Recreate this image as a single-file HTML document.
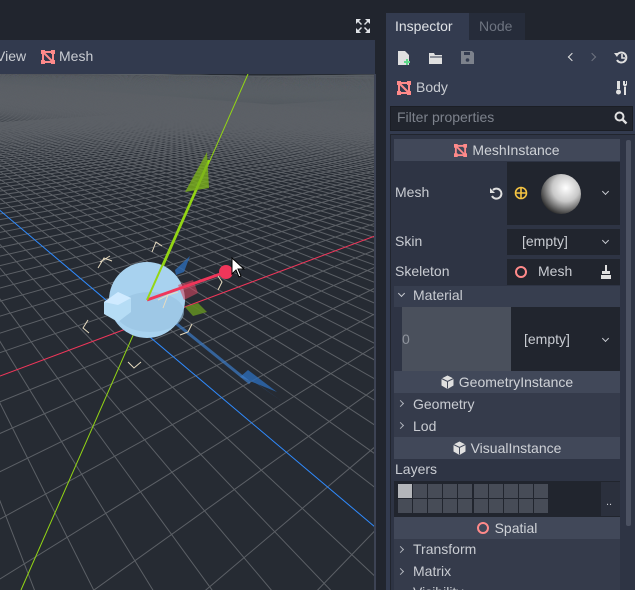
<!DOCTYPE html>
<html style="overflow:hidden;height:590px"><head><meta charset="utf-8"><style>
*{margin:0;padding:0;box-sizing:border-box}
body{width:635px;height:590px;overflow:hidden;background:#21252e;font-family:"Liberation Sans","DejaVu Sans",sans-serif;font-size:14px;color:#c9ccd2;position:relative}
.a{position:absolute}
.hdr{position:absolute;left:394px;width:226px;background:#414859;text-align:center;line-height:22px;color:#cfd2d7}
.val{position:absolute;background:#21252e}
.lbl{position:absolute;left:395px}
.chev{position:absolute;width:6px;height:6px;border-right:1.5px solid #c9ccd2;border-bottom:1.5px solid #c9ccd2;transform:rotate(45deg)}
.chr{position:absolute;width:5px;height:5px;border-right:1.5px solid #aeb2ba;border-bottom:1.5px solid #aeb2ba;transform:rotate(-45deg)}
</style></head><body>
<div class="a" style="left:0;top:40px;width:375px;height:34px;background:#323a4e"></div>
<div class="a" style="left:-4px;top:48px;color:#c9ccd2;font-size:14px">View</div>
<svg class="a" style="left:41px;top:50px" width="14" height="14" viewBox="0 0 14 14"><rect x="2" y="2" width="10" height="10" fill="none" stroke="#ff8a8a" stroke-width="2"/><path d="M2 2L12 12" stroke="#ff8a8a" stroke-width="2"/><rect x="0" y="0" width="4" height="4" fill="#ff8a8a"/><rect x="10" y="0" width="4" height="4" fill="#ff8a8a"/><rect x="0" y="10" width="4" height="4" fill="#ff8a8a"/><rect x="10" y="10" width="4" height="4" fill="#ff8a8a"/></svg>
<div class="a" style="left:59px;top:48px">Mesh</div>
<svg class="a" style="left:355px;top:18px" width="16" height="16" viewBox="0 0 16 16" fill="#dfe2e6"><path d="M1 1h5l-2 2 3 3-1 1-3-3-2 2z"/><path d="M15 1v5l-2-2-3 3-1-1 3-3-2-2z"/><path d="M1 15v-5l2 2 3-3 1 1-3 3 2 2z"/><path d="M15 15h-5l2-2-3-3 1-1 3 3 2-2z"/></svg>
<div class="a" style="left:0;top:74px;width:375px;height:516px;overflow:hidden">
<svg id="vp" width="375" height="516" viewBox="0 74 375 516" style="display:block">
<rect x="0" y="74" width="375" height="516" fill="#262b33"/>
<g id="grid" stroke="#5c6066" stroke-width="1"></g>
<line x1="0" y1="376" x2="375" y2="236" stroke="#f0365a" stroke-width="1"/>
<line x1="-80" y1="143" x2="375" y2="527" stroke="#2f8bff" stroke-width="1"/>
<line x1="248" y1="74" x2="21" y2="590" stroke="#93d614" stroke-width="1"/>
<polygon points="277,392 240,377 248,370" fill="#2d6bb5" opacity=".8"/>
<polygon points="240,372 283,402 252,380" fill="#2d6bb5" opacity=".7"/>
<line x1="147" y1="300" x2="250" y2="383" stroke="#3c7bc6" stroke-width="3" opacity=".7"/>
<circle cx="147" cy="300" r="38" fill="#a8d2ef"/>
<ellipse cx="150" cy="312" rx="34" ry="20" fill="#98c2df" opacity=".6"/>
<polygon points="104,302 118,292 131,298 131,312 118,322 104,314" fill="#b5dcf5"/>
<polygon points="118,292 131,298 118,305 104,302" fill="#cfeaff"/>
<polygon points="175,270 190,256 184,272 176,275" fill="#2d6bb5" opacity=".8"/>
<polygon points="178,285 193,280 198,293 184,300" fill="#d24660" opacity=".6"/>
<polygon points="185,307 198,303 207,312 193,316" fill="#5f8a22" opacity=".9"/>
<line x1="147" y1="300" x2="226" y2="272" stroke="#f0365a" stroke-width="3"/>
<circle cx="226" cy="272" r="7" fill="#f0365a"/>
<line x1="147" y1="300" x2="209" y2="160" stroke="#93d614" stroke-width="2"/>
<polygon points="207,152 185,192 209,188" fill="#7bb01a" opacity=".8"/>
<g stroke="#e8dcc0" stroke-width="1" fill="none"><path d="M98 268l6-10 8 3M100 262l10 -6"/><path d="M152 252l4-10 6 4"/><path d="M88 320l-5 8 6 5"/><path d="M128 362l6 6 7-6"/><path d="M180 335l8-3 4-8"/><path d="M218 290l4-8 -4-6"/><path d="M158 300l10-5 10-3M168 295l-5 13"/></g>
<path d="M232 258v16l4-4 3 7 2-1-3-7h6z" fill="#fff" stroke="#000" stroke-width="1"/>
</svg></div>
<div class="a" style="left:374px;top:74px;width:2px;height:516px;background:#3d4354"></div>
<div class="a" style="left:386px;top:13px;width:83px;height:28px;background:#333b4f"></div>
<div class="a" style="left:395px;top:18px;color:#dfe2e6">Inspector</div>
<div class="a" style="left:469px;top:13px;width:56px;height:28px;background:#262c3a"></div>
<div class="a" style="left:479px;top:18px;color:#6e7480">Node</div>
<div class="a" style="left:386px;top:40px;width:249px;height:550px;background:#333b4f"></div>
<svg class="a" style="left:397px;top:50px" width="14" height="16" viewBox="0 0 14 16"><path d="M1 1h7l4 4v10H1z" fill="#e0e0e0"/><path d="M9 9h2v2h2v2h-2v2H9v-2H7v-2h2z" fill="#5fd88a"/></svg>
<svg class="a" style="left:428px;top:51px" width="16" height="14" viewBox="0 0 16 14"><path d="M1 2h5l1 2h7v9H1z" fill="#e0e0e0"/><path d="M2 6h12" stroke="#333b4f"/></svg>
<svg class="a" style="left:460px;top:50px" width="15" height="15" viewBox="0 0 15 15"><path d="M1 1h11l2 2v11H1z" fill="#7d828c"/><rect x="4" y="2" width="6" height="3" fill="#333b4f"/><circle cx="7.5" cy="10" r="1.8" fill="#333b4f"/></svg>
<div class="chev" style="left:569px;top:54px;transform:rotate(135deg);border-color:#e0e0e0"></div>
<div class="chev" style="left:589px;top:54px;transform:rotate(-45deg);border-color:#6e7480"></div>
<svg class="a" style="left:614px;top:50px" width="15" height="15" viewBox="0 0 15 15"><path d="M3 5a5 5 0 1 1 0 5" fill="none" stroke="#e0e0e0" stroke-width="2"/><path d="M0 3l5 0-2 4z" fill="#e0e0e0"/><path d="M8 4v4h3" fill="none" stroke="#e0e0e0" stroke-width="1.6"/></svg>
<svg class="a" style="left:397px;top:81px" width="14" height="14" viewBox="0 0 14 14"><rect x="2" y="2" width="10" height="10" fill="none" stroke="#ff8a8a" stroke-width="2"/><path d="M2 2L12 12" stroke="#ff8a8a" stroke-width="2"/><rect x="0" y="0" width="4" height="4" fill="#ff8a8a"/><rect x="10" y="0" width="4" height="4" fill="#ff8a8a"/><rect x="0" y="10" width="4" height="4" fill="#ff8a8a"/><rect x="10" y="10" width="4" height="4" fill="#ff8a8a"/></svg>
<div class="a" style="left:416px;top:79px">Body</div>
<svg class="a" style="left:616px;top:80px" width="12" height="16" viewBox="0 0 12 16" fill="#e0e0e0"><path d="M1 1h3v8h-3z"/><circle cx="2.5" cy="12" r="2.5"/><path d="M7 1v4l2 2 2-2V1h-1v3h-1V1zM8 7h2v8H8z"/></svg>
<div class="a" style="left:390px;top:106px;width:243px;height:25px;background:#21252e;border:1px solid #1b1e25"></div>
<div class="a" style="left:397px;top:109px;color:#7d828c">Filter properties</div>
<svg class="a" style="left:614px;top:111px" width="14" height="14" viewBox="0 0 14 14"><circle cx="5.5" cy="5.5" r="4" fill="none" stroke="#e0e0e0" stroke-width="2"/><path d="M8.5 8.5l4 4" stroke="#e0e0e0" stroke-width="2.4"/></svg>
<div class="a" style="left:390px;top:134px;width:245px;height:456px;background:#2e3444;border-left:1px solid #21252e;border-top:1px solid #21252e"></div>
<div class="a" style="left:626px;top:140px;width:5px;height:386px;background:#4b5161;border-radius:2px"></div>
<div class="hdr" style="top:139px"><svg style="vertical-align:-2px;margin-right:5px" width="13" height="13" viewBox="0 0 14 14"><rect x="2" y="2" width="10" height="10" fill="none" stroke="#ff8a8a" stroke-width="2"/><path d="M2 2L12 12" stroke="#ff8a8a" stroke-width="2"/><rect x="0" y="0" width="4" height="4" fill="#ff8a8a"/><rect x="10" y="0" width="4" height="4" fill="#ff8a8a"/><rect x="0" y="10" width="4" height="4" fill="#ff8a8a"/><rect x="10" y="10" width="4" height="4" fill="#ff8a8a"/></svg>MeshInstance</div>
<div class="lbl" style="top:184px">Mesh</div>
<svg class="a" style="left:489px;top:186px" width="14" height="14" viewBox="0 0 14 14"><path d="M4 4a5 5 0 1 1-1 6" fill="none" stroke="#e0e0e0" stroke-width="2"/><path d="M1 2v5h5z" fill="#e0e0e0"/></svg>
<div class="val" style="left:507px;top:162px;width:113px;height:63px"></div>
<svg class="a" style="left:514px;top:186px" width="14" height="14" viewBox="0 0 14 14"><circle cx="7" cy="7" r="5.5" fill="none" stroke="#f5c442" stroke-width="1.6"/><path d="M7 1v12M1 7h12" stroke="#f5c442" stroke-width="1.6"/></svg>
<svg class="a" style="left:540px;top:173px" width="42" height="42"><defs><radialGradient id="sg" cx="0.62" cy="0.35" r="0.75"><stop offset="0" stop-color="#fff"/><stop offset="0.45" stop-color="#c8c8c8"/><stop offset="0.8" stop-color="#555"/><stop offset="1" stop-color="#111"/></radialGradient></defs><circle cx="21" cy="21" r="20" fill="url(#sg)"/></svg>
<div class="chev" style="left:603px;top:189px;width:5px;height:5px"></div>
<div class="lbl" style="top:233px">Skin</div>
<div class="val" style="left:507px;top:229px;width:113px;height:26px"></div>
<div class="a" style="left:522px;top:233px">[empty]</div>
<div class="chev" style="left:603px;top:238px;width:5px;height:5px"></div>
<div class="lbl" style="top:263px">Skeleton</div>
<div class="val" style="left:507px;top:259px;width:113px;height:26px"></div>
<div class="a" style="left:515px;top:266px;width:12px;height:12px;border:2px solid #ff8a8a;border-radius:50%"></div>
<div class="a" style="left:538px;top:263px">Mesh</div>
<svg class="a" style="left:600px;top:265px" width="12" height="14" viewBox="0 0 12 14" fill="#e0e0e0"><rect x="5" y="0" width="2" height="6"/><rect x="2" y="6" width="8" height="3"/><rect x="1" y="10" width="10" height="4"/></svg>
<div class="a" style="left:394px;top:286px;width:226px;height:21px;background:#373e4f"></div>
<div class="chev" style="left:399px;top:291px;width:5px;height:5px"></div>
<div class="a" style="left:413px;top:287px">Material</div>
<div class="a" style="left:402px;top:307px;width:109px;height:64px;background:#4a505c"></div>
<div class="a" style="left:402px;top:331px;color:#8e939c">0</div>
<div class="val" style="left:511px;top:307px;width:109px;height:64px"></div>
<div class="a" style="left:524px;top:331px">[empty]</div>
<div class="chev" style="left:603px;top:336px;width:5px;height:5px"></div>
<div class="hdr" style="top:371px"><svg style="vertical-align:-2px;margin-right:5px" width="13" height="14" viewBox="0 0 13 14"><path d="M6.5 0.5l6 3v7l-6 3.5-6-3.5v-7z" fill="#e0e0e0"/><path d="M0.5 3.5l6 3 6-3M6.5 6.5v7" stroke="#414859" fill="none"/></svg>GeometryInstance</div>
<div class="a" style="left:394px;top:393px;width:226px;height:44px;background:#353b4b"></div>
<div class="chr" style="left:398px;top:401px"></div><div class="a" style="left:413px;top:396px">Geometry</div>
<div class="chr" style="left:398px;top:423px"></div><div class="a" style="left:413px;top:418px">Lod</div>
<div class="hdr" style="top:437px"><svg style="vertical-align:-2px;margin-right:5px" width="13" height="14" viewBox="0 0 13 14"><path d="M6.5 0.5l6 3v7l-6 3.5-6-3.5v-7z" fill="#e0e0e0"/><path d="M0.5 3.5l6 3 6-3M6.5 6.5v7" stroke="#414859" fill="none"/></svg>VisualInstance</div>
<div class="lbl" style="top:461px">Layers</div>
<div class="val" style="left:394px;top:481px;width:226px;height:36px"></div>
<div class="a" style="left:601px;top:482px;width:19px;height:34px;background:#2b303d"></div>
<div class="a" style="left:606px;top:496px;font-size:11px">..</div>
<div id="cells"></div>
<div class="hdr" style="top:517px"><span style="display:inline-block;width:12px;height:12px;border:2px solid #ff8a8a;border-radius:50%;vertical-align:-1px;margin-right:6px"></span>Spatial</div>
<div class="a" style="left:394px;top:539px;width:226px;height:51px;background:#353b4b;overflow:hidden">
<div class="chr" style="left:4px;top:8px"></div><div class="a" style="left:19px;top:2px">Transform</div>
<div class="chr" style="left:4px;top:30px"></div><div class="a" style="left:19px;top:24px">Matrix</div>
<div class="a" style="left:19px;top:45px">Visibility</div>
</div>
<script>
(function(){
var g=document.getElementById('grid'),s='';
var O=[135,325],VR=[820,70],VB=[-167,70];
function pt(V,k,t){var f=t/(t+k);return [O[0]+(V[0]-O[0])*f,O[1]+(V[1]-O[1])*f];}
function ln(V,P,o){var x2=V[0]+(P[0]-V[0])*30,y2=V[1]+(P[1]-V[1])*30;s+='<line x1="'+V[0]+'" y1="'+V[1]+'" x2="'+x2+'" y2="'+y2+'"'+(o<1?' stroke-opacity="'+o+'"':'')+'/>';}
for(var t=-16;t<400;t++){if(t==0)continue;ln(VR,pt(VB,18,t),t>60?0.35:1);}
for(var t=-30;t<600;t++){if(t==0)continue;ln(VB,pt(VR,34,t),t>100?0.35:1);}
g.innerHTML=s;
var c='';
for(var r=0;r<2;r++)for(var i=0;i<10;i++){var x=398+i*15+(i>=5?1:0),y=484+r*15;c+='<div class="a" style="left:'+x+'px;top:'+y+'px;width:14px;height:14px;background:'+(r==0&&i==0?'#b4b6ba':'#474c57')+'"></div>';}
document.getElementById('cells').innerHTML=c;
})();
</script>
</body></html>
